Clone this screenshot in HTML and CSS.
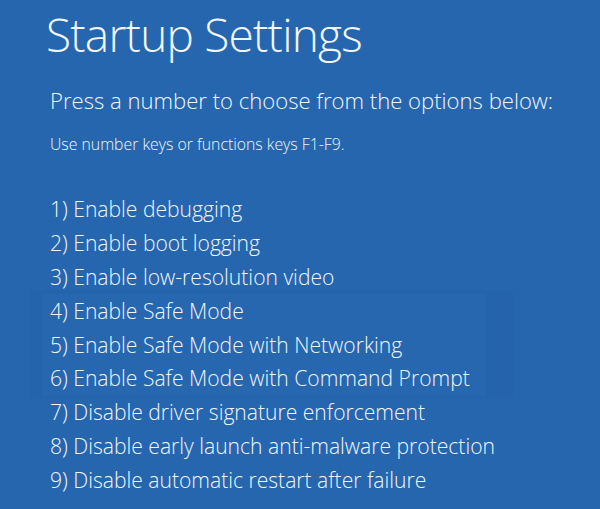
FILE: index.html
```html
<!doctype html>
<html lang="en">

<head>
    <meta charset="utf-8">
    <meta name="viewport" content="width=device-width, initial-scale=1.0">
    <title>Startup Settings</title>
    <link rel="stylesheet" href="styles.css">
</head>

<body>

    <div class="screen">
        <h1 class="title">Startup Settings</h1>
        <p class="prompt">Press a number to choose from the options below:</p>
        <p class="hint">Use number keys or functions keys F1-F9.</p>

        <ul class="options">
            <li>1) Enable debugging</li>
            <li>2) Enable boot logging</li>
            <li>3) Enable low-resolution video</li>
            <li class="group">
                <ul class="group_inner">
                    <li>4) Enable Safe Mode</li>
                    <li>5) Enable Safe Mode with Networking</li>
                    <li>6) Enable Safe Mode with Command Prompt</li>
                </ul>
            </li>
            <li>7) Disable driver signature enforcement</li>
            <li>8) Disable early launch anti-malware protection</li>
            <li>9) Disable automatic restart after failure</li>
        </ul>
    </div>

</body>

</html>
```

FILE: styles.css
```css
* {
    padding: 0;
    margin: 0;
    box-sizing: border-box;
}

html,
body {
    background: #2666ae;
    height: 100%;
}

body {
    font-family: "Open Sans", "Noto Sans", sans-serif;
    color: #f2f6fb;
    overflow: hidden;
}

.screen {
    padding: 11px 0 0 46px;
}

.title {
    font-size: 46px;
    font-weight: 300;
    letter-spacing: -0.8px;
    line-height: 1;
}

.prompt {
    margin-top: 32px;
    margin-left: 4px;
    font-size: 22.1px;
    font-weight: 350;
    line-height: 1;
}

.hint {
    margin-top: 26px;
    margin-left: 4px;
    font-size: 15.8px;
    font-weight: 350;
    line-height: 1;
}

.options {
    list-style: none;
    margin-top: 39px;
    margin-left: 4px;
    font-size: 21.1px;
    font-weight: 350;
    line-height: 33.9px;
}

/* faint band behind 4-6 */
.group {
    margin: -4px 0 -4px -20px;
    padding: 4px 0;
    width: 483px;
    background: #2563ac;
}

.group_inner {
    list-style: none;
    margin-left: 12px;
    width: 444px;
    padding-left: 8px;
    background: #2767af;
}
```
